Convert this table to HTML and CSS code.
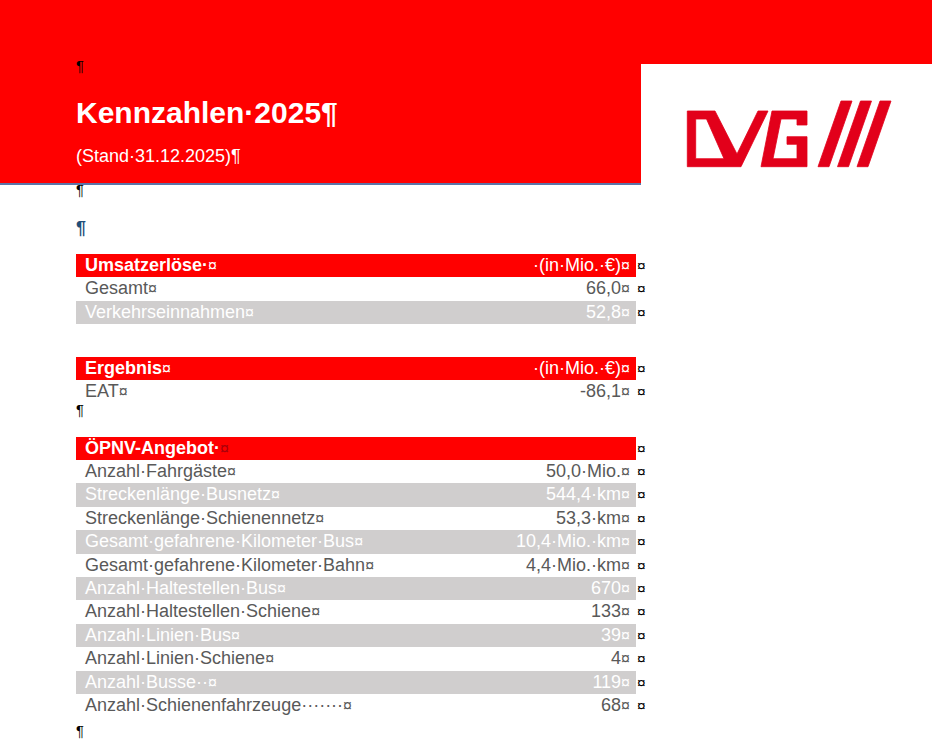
FILE: index.html
```html
<!DOCTYPE html>
<html lang="de">
<head>
<meta charset="utf-8">
<title>Kennzahlen 2025</title>
<link rel="stylesheet" href="styles.css">
</head>
<body>
<header class="hdr">
  <div class="hdr-left">
    <p class="pil">¶</p>
    <h1 class="title">Kennzahlen·2025¶</h1>
    <p class="sub">(Stand·31.12.2025)¶</p>
  </div>
  <div class="hdr-right">
    <div class="hdr-band"></div>
    <div class="logo">
      <svg width="207" height="68" viewBox="685 100 207 68" xmlns="http://www.w3.org/2000/svg">
        <g fill="#e2001a" stroke="#e2001a" stroke-width="0.8" stroke-linejoin="round">
          <path fill-rule="evenodd" d="M687.3 111 H715 L737 154 L758 111 H768 L741 166.7 H687.3 Z M695.7 119 H706.5 L724 158.7 H695.7 Z"/>
          <path d="M772 111 H807 V125 H797 V119 H781 L773 158.7 H797 V144.3 H787 V136.7 H807 V166.7 H761 Z"/>
          <path d="M841 101 H852 L829 166.7 H818 Z"/>
          <path d="M860.5 101 H871.5 L848.5 166.7 H837.5 Z"/>
          <path d="M880 101 H891 L868 166.7 H857 Z"/>
        </g>
      </svg>
    </div>
  </div>
</header>

<main class="doc">
  <p class="pil-a">¶</p>
  <p class="pil-blue">¶</p>

  <div class="tbl t1">
    <div class="row head"><div class="band"><span class="lbl"><b>Umsatzerlöse·</b><i class="cm">¤</i></span><span class="val">·(in·Mio.·€)<i class="cm">¤</i></span></div><span class="eor">¤</span></div>
    <div class="row"><div class="band"><span class="lbl">Gesamt<i class="cm">¤</i></span><span class="val">66,0<i class="cm">¤</i></span></div><span class="eor">¤</span></div>
    <div class="row alt"><div class="band"><span class="lbl">Verkehrseinnahmen<i class="cm">¤</i></span><span class="val">52,8<i class="cm">¤</i></span></div><span class="eor">¤</span></div>
  </div>

  <div class="tbl t2">
    <div class="row head"><div class="band"><span class="lbl"><b>Ergebnis</b><i class="cm">¤</i></span><span class="val">·(in·Mio.·€)<i class="cm">¤</i></span></div><span class="eor">¤</span></div>
    <div class="row"><div class="band"><span class="lbl">EAT<i class="cm">¤</i></span><span class="val">-86,1<i class="cm">¤</i></span></div><span class="eor">¤</span></div>
  </div>
  <p class="pil-b">¶</p>

  <div class="tbl t3">
    <div class="row head"><div class="band"><span class="lbl"><b>ÖPNV-Angebot·</b><i class="cm dark">¤</i></span><span class="val"></span></div><span class="eor">¤</span></div>
    <div class="row"><div class="band"><span class="lbl">Anzahl·Fahrgäste<i class="cm">¤</i></span><span class="val">50,0·Mio.<i class="cm">¤</i></span></div><span class="eor">¤</span></div>
    <div class="row alt"><div class="band"><span class="lbl">Streckenlänge·Busnetz<i class="cm">¤</i></span><span class="val">544,4·km<i class="cm">¤</i></span></div><span class="eor">¤</span></div>
    <div class="row"><div class="band"><span class="lbl">Streckenlänge·Schienennetz<i class="cm">¤</i></span><span class="val">53,3·km<i class="cm">¤</i></span></div><span class="eor">¤</span></div>
    <div class="row alt"><div class="band"><span class="lbl">Gesamt·gefahrene·Kilometer·Bus<i class="cm">¤</i></span><span class="val">10,4·Mio.·km<i class="cm">¤</i></span></div><span class="eor">¤</span></div>
    <div class="row"><div class="band"><span class="lbl">Gesamt·gefahrene·Kilometer·Bahn<i class="cm">¤</i></span><span class="val">4,4·Mio.·km<i class="cm">¤</i></span></div><span class="eor">¤</span></div>
    <div class="row alt"><div class="band"><span class="lbl">Anzahl·Haltestellen·Bus<i class="cm">¤</i></span><span class="val">670<i class="cm">¤</i></span></div><span class="eor">¤</span></div>
    <div class="row"><div class="band"><span class="lbl">Anzahl·Haltestellen·Schiene<i class="cm">¤</i></span><span class="val">133<i class="cm">¤</i></span></div><span class="eor">¤</span></div>
    <div class="row alt"><div class="band"><span class="lbl">Anzahl·Linien·Bus<i class="cm">¤</i></span><span class="val">39<i class="cm">¤</i></span></div><span class="eor">¤</span></div>
    <div class="row"><div class="band"><span class="lbl">Anzahl·Linien·Schiene<i class="cm">¤</i></span><span class="val">4<i class="cm">¤</i></span></div><span class="eor">¤</span></div>
    <div class="row alt"><div class="band"><span class="lbl">Anzahl·Busse··<i class="cm">¤</i></span><span class="val">119<i class="cm">¤</i></span></div><span class="eor">¤</span></div>
    <div class="row"><div class="band"><span class="lbl">Anzahl·Schienenfahrzeuge·······<i class="cm">¤</i></span><span class="val">68<i class="cm">¤</i></span></div><span class="eor">¤</span></div>
  </div>
  <p class="pil-c">¶</p>
</main>
</body>
</html>
```

FILE: styles.css
```css
html, body {
  margin: 0;
  padding: 0;
}
body {
  width: 932px;
  height: 756px;
  overflow: hidden;
  background: #ffffff;
  font-family: "Liberation Sans", Arial, sans-serif;
  color: #595959;
}
p, h1 {
  margin: 0;
  font-weight: normal;
}

/* header */
.hdr {
  display: flex;
}
.hdr-left {
  width: 641px;
  height: 185px;
  box-sizing: border-box;
  background: #ff0000;
  border-bottom: 2px solid #5b74a8;
  padding: 58px 0 0 76px;
  color: #ffffff;
}
.pil {
  font-size: 14.67px;
  line-height: 17px;
  color: #000000;
}
.title {
  font-size: 30px;
  font-weight: bold;
  line-height: 34px;
  margin-top: 21px;
  white-space: nowrap;
}
.sub {
  font-size: 18px;
  line-height: 21px;
  margin-top: 15.5px;
  white-space: nowrap;
}
.hdr-right {
  flex: 1;
  display: flex;
  flex-direction: column;
}
.hdr-band {
  height: 64px;
  background: #ff0000;
}
.logo {
  padding: 36px 0 0 44px;
  line-height: 0;
}

/* document body */
.doc {
  padding-left: 76px;
}
.pil-a {
  font-size: 14.67px;
  line-height: 10px;
  color: #000000;
}
.pil-blue {
  font-size: 18px;
  font-weight: bold;
  line-height: 20px;
  color: #1f4e79;
  margin-top: 23.3px;
}
.pil-b, .pil-c {
  font-size: 14.67px;
  line-height: 14px;
  color: #000000;
}
.pil-c {
  margin-top: 6.8px;
}

.t1 { margin-top: 15.7px; }
.t2 { margin-top: 32.5px; }
.t3 { margin-top: 19.2px; }

.row {
  display: flex;
  height: 23.4px;
  font-size: 18px;
  line-height: 23.4px;
  white-space: nowrap;
}
.band {
  width: 560px;
  box-sizing: border-box;
  display: flex;
  justify-content: space-between;
  padding: 0 6px 0 9px;
  color: #595959;
  background: #ffffff;
}
.row.head .band {
  background: #ff0000;
  color: #ffffff;
}
.row.alt .band {
  background: #d0cece;
  color: #ffffff;
}
.cm {
  font-style: normal;
  font-size: 16px;
}
.cm.dark {
  color: #a8000b;
}
.eor {
  font-size: 15.5px;
  color: #000000;
  margin-left: 1px;
}
```
